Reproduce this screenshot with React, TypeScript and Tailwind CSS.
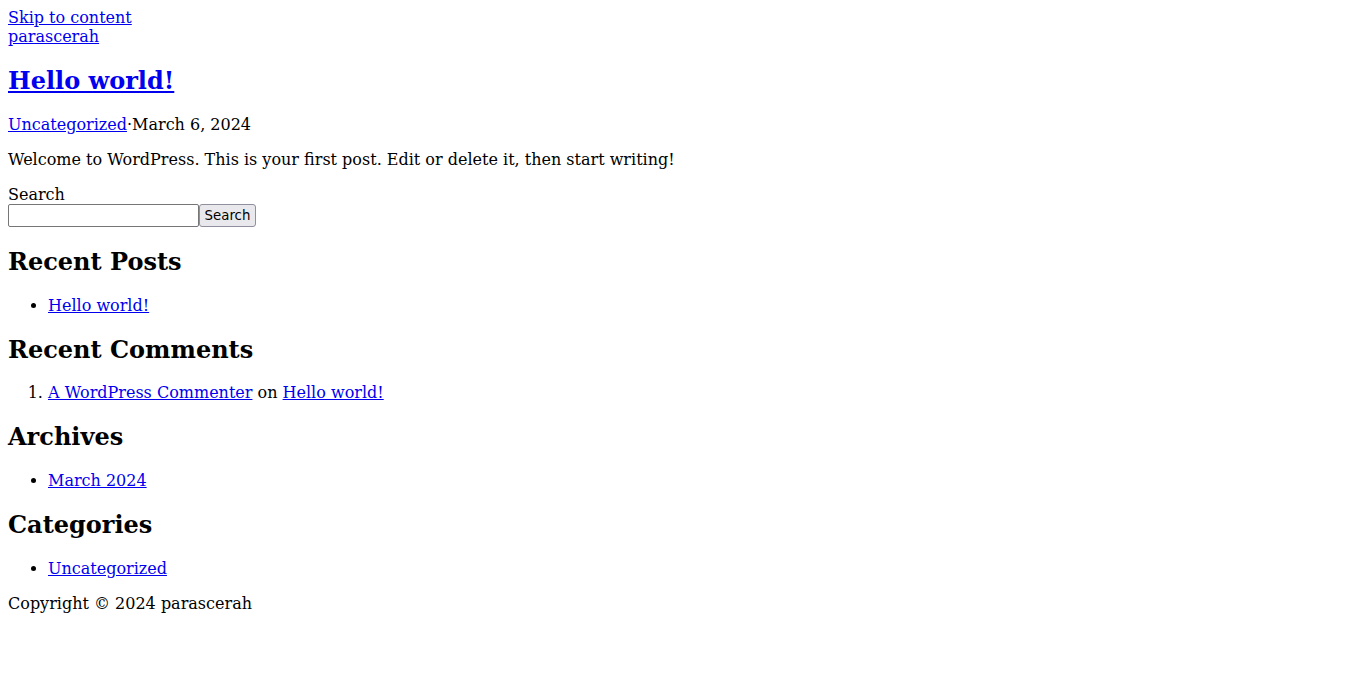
const link = "text-[#0000ee] underline";
const h2 = "my-[19.92px] text-[24px] font-bold";

function Section({ title, children }: { title: string; children: React.ReactNode }) {
  return (
    <div>
      <h2 className={h2}>{title}</h2>
      {children}
    </div>
  );
}

export default function App() {
  return (
    <div className="m-2 font-['DejaVu_Serif',serif] text-base leading-[normal] text-black">
      <a href="#main" className={`${link} block w-fit`}>
        Skip to content
      </a>
      <div>
        <a href="#" className={link}>
          parascerah
        </a>
      </div>
      <main id="main">
        <h2 className={h2}>
          <a href="#" className={link}>
            Hello world!
          </a>
        </h2>
        <p className="my-4">
          <a href="#" className={link}>
            Uncategorized
          </a>
          ·March 6, 2024
        </p>
        <p className="my-4">
          Welcome to WordPress. This is your first post. Edit or delete it, then start writing!
        </p>
      </main>
      <form className="my-4" onSubmit={(e) => e.preventDefault()}>
        <label className="block">Search</label>
        <div className="flex items-center">
          <input
            type="search"
            className="h-[23px] w-[191px] rounded-[2px] border border-[#767676] bg-white px-[2px] font-['DejaVu_Sans',sans-serif] text-[13.33px]"
          />
          <button
            type="submit"
            className="h-[23px] w-[57px] rounded-[3px] border border-[#8f8f9d] bg-[#e9e9ed] font-['DejaVu_Sans',sans-serif] text-[13.33px] leading-none"
          >
            Search
          </button>
        </div>
      </form>
      <Section title="Recent Posts">
        <ul className="my-4 list-disc pl-10">
          <li>
            <a href="#" className={link}>
              Hello world!
            </a>
          </li>
        </ul>
      </Section>
      <Section title="Recent Comments">
        <ol className="my-4 list-decimal pl-10">
          <li>
            <a href="#" className={link}>
              A WordPress Commenter
            </a>{" "}
            on{" "}
            <a href="#" className={link}>
              Hello world!
            </a>
          </li>
        </ol>
      </Section>
      <Section title="Archives">
        <ul className="my-4 list-disc pl-10">
          <li>
            <a href="#" className={link}>
              March 2024
            </a>
          </li>
        </ul>
      </Section>
      <Section title="Categories">
        <ul className="my-4 list-disc pl-10">
          <li>
            <a href="#" className={link}>
              Uncategorized
            </a>
          </li>
        </ul>
      </Section>
      <p className="my-4">Copyright © 2024 parascerah</p>
    </div>
  );
}
